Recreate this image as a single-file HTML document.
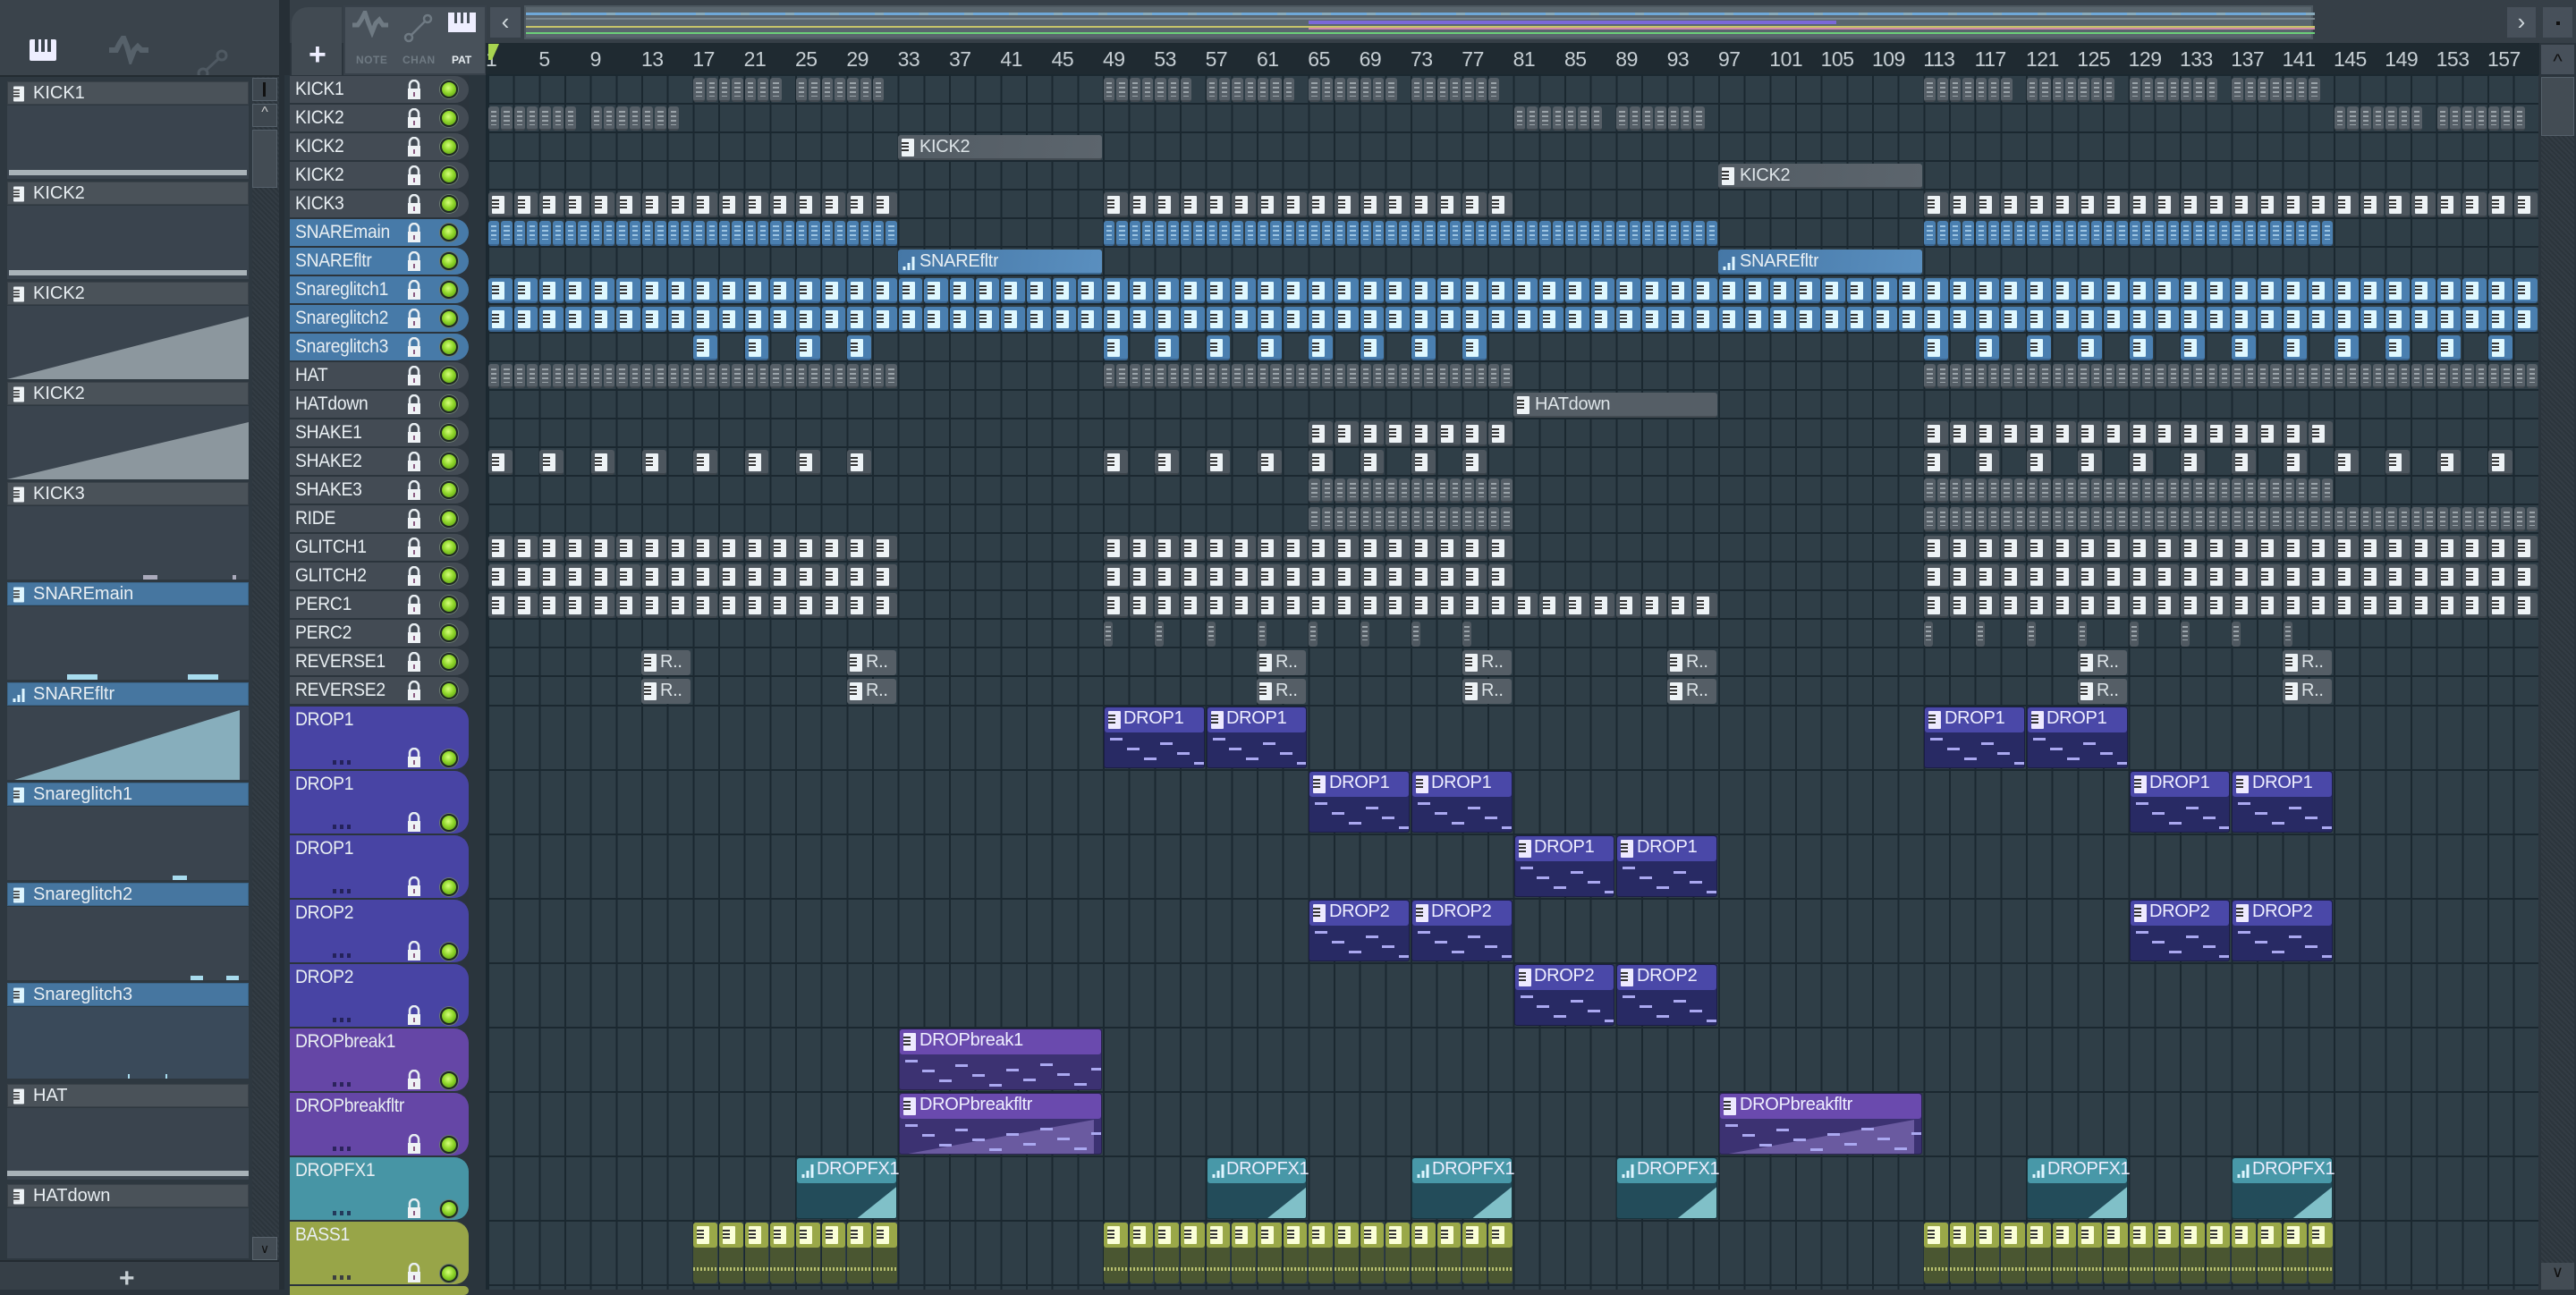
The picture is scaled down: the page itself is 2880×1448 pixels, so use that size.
<!DOCTYPE html>
<html><head><meta charset="utf-8"><style>
*{box-sizing:border-box;margin:0;padding:0}
body{width:2880px;height:1442px;overflow:hidden;background:#2b343c;font-family:"Liberation Sans",sans-serif;position:relative;color:#e8eef2}
.a{position:absolute}
#grid{position:absolute;left:545px;top:84px;width:2293px;height:1358px;background-color:#2f3e47;
background-image:repeating-linear-gradient(to right,#1b2830 0 2px,transparent 2px 28.666px);}
.rl{position:absolute;left:545px;width:2293px;height:2px;background:#1b2830}
.th{position:absolute;left:324px;width:200px;border-radius:0 16px 16px 0;background:#434b54;font-size:21px;letter-spacing:-.3px}
.th .n{position:absolute;left:6px;top:3px;white-space:nowrap}
.led{position:absolute;width:20px;height:20px;border-radius:50%;background:radial-gradient(circle at 45% 40%,#d4ff7a,#8fd62a 45%,#4f8e12);border:2px solid #1f2a22;box-shadow:0 0 0 1px #6a7a70}
.lk{position:absolute;width:16px;height:22px}
.dots{position:absolute;left:48px;width:22px;height:5px;background:repeating-linear-gradient(to right,rgba(20,20,60,.7) 0 4px,transparent 4px 8px)}
.c{position:absolute;border-radius:3px}
.lab{position:absolute;font-size:20px;letter-spacing:-.3px;white-space:nowrap;overflow:hidden}
.ci{position:absolute;width:14px;height:20px;background:#eef3f6;border-radius:1px}
.ci:after{content:"";position:absolute;left:0;top:4px;width:8px;height:12px;background:repeating-linear-gradient(to bottom,#333 0 2px,transparent 2px 4px)}
.ch{position:absolute;left:8px;width:270px;height:26px;background:#4a5259;border:1px solid #3a4249;font-size:20px}
.ch span{position:absolute;left:28px;top:1px}
.ch .ci{left:5px;top:3px;transform:scale(.85)}
.cb{position:absolute;left:8px;width:270px;background:#3a444e}
</style></head><body>

<div class="a" style="left:0;top:0;width:318px;height:84px;background:#3a434b"></div>
<div class="a" style="left:33px;top:44px;width:30px;height:24px;background:#eef;border-radius:2px"><div class="a" style="left:6px;top:0;width:4px;height:14px;background:#3a434b"></div><div class="a" style="left:13px;top:0;width:4px;height:14px;background:#3a434b"></div><div class="a" style="left:20px;top:0;width:4px;height:14px;background:#3a434b"></div></div>
<svg class="a" style="left:120px;top:40px" width="46" height="32"><path d="M2 16h8l4-8 4-6 4 10 4 14 4-10 4-4 4 4h8" stroke="#56616a" stroke-width="6" fill="none"/></svg>
<svg class="a" style="left:220px;top:54px" width="36" height="40"><circle cx="7" cy="28" r="5" stroke="#4f5962" stroke-width="3" fill="none"/><circle cx="28" cy="8" r="5" stroke="#4f5962" stroke-width="3" fill="none"/><path d="M11 24L24 12" stroke="#4f5962" stroke-width="3"/></svg>
<div class="a" style="left:0;top:84px;width:318px;height:2px;background:#232b31"></div>
<div class="a" style="left:0;top:86px;width:282px;height:1328px;background:#2e3840"></div>

<div class="ch" style="top:91px"><div class="ci"></div><span>KICK1</span></div><div class="cb" style="top:118px;height:82px"><div class="a" style="left:2px;bottom:4px;width:266px;height:6px;background:#a8b2b8"></div></div>
<div class="ch" style="top:203px"><div class="ci"></div><span>KICK2</span></div><div class="cb" style="top:230px;height:82px"><div class="a" style="left:2px;bottom:4px;width:266px;height:6px;background:#a8b2b8"></div></div>
<div class="ch" style="top:315px"><div class="ci"></div><span>KICK2</span></div><div class="cb" style="top:342px;height:82px"><div class="a" style="left:0;bottom:0;width:270px;height:70px;background:#8c979e;clip-path:polygon(0 100%,100% 0,100% 100%)"></div></div>
<div class="ch" style="top:427px"><div class="ci"></div><span>KICK2</span></div><div class="cb" style="top:454px;height:82px"><div class="a" style="left:0;bottom:0;width:270px;height:64px;background:#8c979e;clip-path:polygon(0 100%,100% 0,100% 100%)"></div></div>
<div class="ch" style="top:539px"><div class="ci"></div><span>KICK3</span></div><div class="cb" style="top:566px;height:82px"><div class="a" style="left:152px;bottom:0;width:16px;height:5px;background:#aab"></div><div class="a" style="left:252px;bottom:0;width:4px;height:5px;background:#aab"></div></div>
<div class="ch" style="top:651px;background:#4676a0;border-color:#3b6588"><div class="ci" style="background:#dff6ff"></div><span>SNAREmain</span></div><div class="cb" style="top:678px;height:82px"><div class="a" style="left:67px;bottom:0;width:34px;height:6px;background:#a8dcee"></div><div class="a" style="left:202px;bottom:0;width:34px;height:6px;background:#a8dcee"></div></div>
<div class="ch" style="top:763px;background:#4676a0;border-color:#3b6588"><svg class="a" style="left:4px;top:4px" width="18" height="18"><path d="M3 17v-4M8 17v-8M13 17V2" stroke="#dff6ff" stroke-width="3"/></svg><span>SNAREfltr</span></div><div class="cb" style="top:790px;height:82px"><div class="a" style="left:8px;bottom:0;width:252px;height:78px;background:#87aebc;clip-path:polygon(0 100%,100% 0,100% 100%)"></div></div>
<div class="ch" style="top:875px;background:#4676a0;border-color:#3b6588"><div class="ci" style="background:#dff6ff"></div><span>Snareglitch1</span></div><div class="cb" style="top:902px;height:82px"><div class="a" style="left:185px;bottom:0;width:16px;height:5px;background:#a8dcee"></div></div>
<div class="ch" style="top:987px;background:#4676a0;border-color:#3b6588"><div class="ci" style="background:#dff6ff"></div><span>Snareglitch2</span></div><div class="cb" style="top:1014px;height:82px"><div class="a" style="left:205px;bottom:0;width:14px;height:5px;background:#a8dcee"></div><div class="a" style="left:245px;bottom:0;width:14px;height:5px;background:#a8dcee"></div></div>
<div class="ch" style="top:1099px;background:#4676a0;border-color:#3b6588"><div class="ci" style="background:#dff6ff"></div><span>Snareglitch3</span></div><div class="cb" style="top:1126px;height:80px;background:#3a4a5a"><div class="a" style="left:135px;bottom:0;width:2px;height:5px;background:#a8dcee"></div><div class="a" style="left:177px;bottom:0;width:2px;height:5px;background:#a8dcee"></div></div>
<div class="ch" style="top:1212px"><div class="ci"></div><span>HAT</span></div><div class="cb" style="top:1239px;height:80px"><div class="a" style="left:0;bottom:4px;width:270px;height:6px;background:#a8b2b8"></div></div>
<div class="ch" style="top:1324px"><div class="ci"></div><span>HATdown</span></div><div class="cb" style="top:1351px;height:56px"></div>
<div class="a" style="left:0;top:1409px;width:312px;height:33px;background:#363f47;border-top:2px solid #232b31"></div>
<div class="a" style="left:133px;top:1420px;font-size:30px;font-weight:bold;color:#c8d0d4;line-height:20px">+</div>

<div class="a" style="left:282px;top:86px;width:30px;height:1322px;background:repeating-linear-gradient(45deg,#2c353c 0 2px,#333c44 2px 4px)"></div>
<div class="a" style="left:282px;top:87px;width:28px;height:26px;background:#3e474f;border:1px solid #55606a"><div class="a" style="left:11px;top:4px;width:3px;height:16px;background:#111"></div></div>
<div class="a" style="left:282px;top:116px;width:28px;height:26px;background:#3e474f;border:1px solid #55606a;color:#ccc;font-size:16px;text-align:center">^</div>
<div class="a" style="left:282px;top:145px;width:28px;height:65px;background:#434c54;border:1px solid #55606a"></div>
<div class="a" style="left:282px;top:1383px;width:28px;height:26px;background:#434c54;border:1px solid #5a656e;color:#111;font-size:14px;text-align:center;line-height:24px">∨</div>
<div class="a" style="left:312px;top:0;width:12px;height:1442px;background:#262f36"></div>

<div class="a" style="left:324px;top:0;width:2556px;height:48px;background:#363f47"></div>
<div class="a" style="left:326px;top:8px;width:56px;height:76px;background:#414a52;border-radius:18px 0 0 0"></div>
<div class="a" style="left:345px;top:42px;font-size:34px;font-weight:bold;color:#eef">+</div>
<div class="a" style="left:384px;top:6px;width:160px;height:78px;background:#48515a;border:2px solid #38414a"></div>
<svg class="a" style="left:392px;top:12px" width="44" height="30"><path d="M2 16h6l4-6 4-8 4 12 4 10 4-10 4-4 4 6h6" stroke="#6f7a83" stroke-width="5" fill="none"/></svg>
<svg class="a" style="left:450px;top:14px" width="36" height="36"><circle cx="7" cy="28" r="4" stroke="#6f7a83" stroke-width="2.5" fill="none"/><circle cx="28" cy="7" r="4" stroke="#6f7a83" stroke-width="2.5" fill="none"/><path d="M10 25L25 10" stroke="#6f7a83" stroke-width="2.5"/></svg>
<div class="a" style="left:501px;top:14px;width:31px;height:22px;background:#eef"><div class="a" style="left:7px;top:0;width:3px;height:12px;background:#48515a"></div><div class="a" style="left:14px;top:0;width:3px;height:12px;background:#48515a"></div><div class="a" style="left:21px;top:0;width:3px;height:12px;background:#48515a"></div></div>
<div class="a" style="left:398px;top:60px;font-size:12px;font-weight:bold;color:#6f7a83;letter-spacing:.5px">NOTE</div>
<div class="a" style="left:450px;top:60px;font-size:12px;font-weight:bold;color:#6f7a83;letter-spacing:.5px">CHAN</div>
<div class="a" style="left:505px;top:60px;font-size:12px;font-weight:bold;color:#e6ecf0">PAT</div>
<div class="a" style="left:546px;top:6px;width:38px;height:38px;background:#47505a;border:2px solid #363f47;color:#d0d8dc;font-size:26px;text-align:center;line-height:32px">‹</div>
<div class="a" style="left:586px;top:6px;width:2000px;height:38px;background:#5a666e;border:2px solid #4d5860">
 <div class="a" style="left:0;top:6px;width:2000px;height:3px;background:repeating-linear-gradient(to right,#6fa8d8 0 40px,#8ab 40px 50px)"></div>
 <div class="a" style="left:0;top:12px;width:2000px;height:2px;background:#7a8890"></div>
 <div class="a" style="left:875px;top:15px;width:590px;height:4px;background:#7a68d8"></div>
 <div class="a" style="left:0;top:21px;width:2000px;height:2px;background:#c6c46a"></div>
 <div class="a" style="left:875px;top:23px;width:1125px;height:2px;background:#d08aa8"></div>
 <div class="a" style="left:0;top:28px;width:2000px;height:2px;background:#6ccf7a"></div>
</div>
<div class="a" style="left:2801px;top:6px;width:36px;height:38px;background:#47505a;border:2px solid #363f47;color:#d0d8dc;font-size:26px;text-align:center;line-height:32px">›</div>
<div class="a" style="left:2841px;top:6px;width:37px;height:38px;background:#47505a;border:2px solid #363f47"><div class="a" style="left:15px;top:16px;width:4px;height:4px;background:#111"></div></div>
<div class="a" style="left:2841px;top:50px;width:37px;height:33px;background:#47505a;color:#111;font-size:22px;text-align:center;line-height:38px">^</div>
<div class="a" style="left:2841px;top:86px;width:37px;height:66px;background:#434c54;border:1px solid #55606a"></div>
<div class="a" style="left:2841px;top:152px;width:37px;height:1290px;background:repeating-linear-gradient(45deg,#2c353c 0 2px,#333c44 2px 4px)"></div>
<div class="a" style="left:2841px;top:1412px;width:37px;height:30px;background:#434c54;color:#111;font-size:18px;text-align:center">∨</div>

<div class="a" style="left:543px;top:48px;width:2296px;height:36px;background:#1f2a31"></div>
<div id="ruler" class="a" style="left:0;top:48px;height:36px;font-size:23px;color:#c6ced3;letter-spacing:-.5px"></div>
<svg class="a" style="left:546px;top:49px" width="14" height="20"><path d="M0 0h12l-8 18H0z" fill="#a8d450"/></svg>

<div id="grid"></div>
<div class="a" style="left:524px;top:84px;width:21px;height:1358px;background:#2a353d;border-right:2px solid #1b2830"></div>
<div class="a" style="left:318px;top:84px;width:6px;height:1358px;background:#2a353d"></div>

<div id="clips"></div>

<div class="c" style="left:1004px;top:151px;width:228px;height:28px;background:linear-gradient(100deg,#535c64,#5c656d);border-bottom:2px solid #444c53"><div class="ci" style="left:4px;top:4px"></div><div class="lab" style="left:24px;top:2px;color:#dde4e8">KICK2</div></div>
<div class="c" style="left:1921px;top:183px;width:228px;height:28px;background:linear-gradient(100deg,#535c64,#5c656d);border-bottom:2px solid #444c53"><div class="ci" style="left:4px;top:4px"></div><div class="lab" style="left:24px;top:2px;color:#dde4e8">KICK2</div></div>
<div class="c" style="left:1004px;top:279px;width:228px;height:28px;background:linear-gradient(100deg,#4577a6,#5a8fbf);border-bottom:2px solid #3b6890"><svg class="a" style="left:4px;top:6px" width="18" height="18"><path d="M3 17v-4M8 17v-8M13 17V2" stroke="#dff6ff" stroke-width="3"/></svg><div class="lab" style="left:24px;top:2px">SNAREfltr</div></div>
<div class="c" style="left:1921px;top:279px;width:228px;height:28px;background:linear-gradient(100deg,#4577a6,#5a8fbf);border-bottom:2px solid #3b6890"><svg class="a" style="left:4px;top:6px" width="18" height="18"><path d="M3 17v-4M8 17v-8M13 17V2" stroke="#dff6ff" stroke-width="3"/></svg><div class="lab" style="left:24px;top:2px">SNAREfltr</div></div>
<div class="c" style="left:1692px;top:439px;width:228px;height:28px;background:#555e66;border-bottom:2px solid #444c53"><div class="ci" style="left:4px;top:4px"></div><div class="lab" style="left:24px;top:2px;color:#dde4e8">HATdown</div></div>

<div class="a" style="left:0;top:0" id="rv">
<div class="c" style="left:717px;top:727px;width:55px;height:28px;background:#555e66"><div class="ci" style="left:3px;top:4px"></div><div class="lab" style="left:21px;top:2px;color:#dde4e8">R..</div></div>
<div class="c" style="left:947px;top:727px;width:55px;height:28px;background:#555e66"><div class="ci" style="left:3px;top:4px"></div><div class="lab" style="left:21px;top:2px;color:#dde4e8">R..</div></div>
<div class="c" style="left:1405px;top:727px;width:55px;height:28px;background:#555e66"><div class="ci" style="left:3px;top:4px"></div><div class="lab" style="left:21px;top:2px;color:#dde4e8">R..</div></div>
<div class="c" style="left:1635px;top:727px;width:55px;height:28px;background:#555e66"><div class="ci" style="left:3px;top:4px"></div><div class="lab" style="left:21px;top:2px;color:#dde4e8">R..</div></div>
<div class="c" style="left:1864px;top:727px;width:55px;height:28px;background:#555e66"><div class="ci" style="left:3px;top:4px"></div><div class="lab" style="left:21px;top:2px;color:#dde4e8">R..</div></div>
<div class="c" style="left:2323px;top:727px;width:55px;height:28px;background:#555e66"><div class="ci" style="left:3px;top:4px"></div><div class="lab" style="left:21px;top:2px;color:#dde4e8">R..</div></div>
<div class="c" style="left:2552px;top:727px;width:55px;height:28px;background:#555e66"><div class="ci" style="left:3px;top:4px"></div><div class="lab" style="left:21px;top:2px;color:#dde4e8">R..</div></div>
<div class="c" style="left:717px;top:759px;width:55px;height:28px;background:#555e66"><div class="ci" style="left:3px;top:4px"></div><div class="lab" style="left:21px;top:2px;color:#dde4e8">R..</div></div>
<div class="c" style="left:947px;top:759px;width:55px;height:28px;background:#555e66"><div class="ci" style="left:3px;top:4px"></div><div class="lab" style="left:21px;top:2px;color:#dde4e8">R..</div></div>
<div class="c" style="left:1405px;top:759px;width:55px;height:28px;background:#555e66"><div class="ci" style="left:3px;top:4px"></div><div class="lab" style="left:21px;top:2px;color:#dde4e8">R..</div></div>
<div class="c" style="left:1635px;top:759px;width:55px;height:28px;background:#555e66"><div class="ci" style="left:3px;top:4px"></div><div class="lab" style="left:21px;top:2px;color:#dde4e8">R..</div></div>
<div class="c" style="left:1864px;top:759px;width:55px;height:28px;background:#555e66"><div class="ci" style="left:3px;top:4px"></div><div class="lab" style="left:21px;top:2px;color:#dde4e8">R..</div></div>
<div class="c" style="left:2323px;top:759px;width:55px;height:28px;background:#555e66"><div class="ci" style="left:3px;top:4px"></div><div class="lab" style="left:21px;top:2px;color:#dde4e8">R..</div></div>
<div class="c" style="left:2552px;top:759px;width:55px;height:28px;background:#555e66"><div class="ci" style="left:3px;top:4px"></div><div class="lab" style="left:21px;top:2px;color:#dde4e8">R..</div></div>
</div>

<div id="big">
<div class="lab a" style="left:1256px;top:792px">DROP1</div><div class="lab a" style="left:1371px;top:792px">DROP1</div><div class="lab a" style="left:2174px;top:792px">DROP1</div><div class="lab a" style="left:2288px;top:792px">DROP1</div>
<div class="lab a" style="left:1486px;top:864px">DROP1</div><div class="lab a" style="left:1600px;top:864px">DROP1</div><div class="lab a" style="left:2403px;top:864px">DROP1</div><div class="lab a" style="left:2518px;top:864px">DROP1</div>
<div class="lab a" style="left:1715px;top:936px">DROP1</div><div class="lab a" style="left:1830px;top:936px">DROP1</div>
<div class="lab a" style="left:1486px;top:1008px">DROP2</div><div class="lab a" style="left:1600px;top:1008px">DROP2</div><div class="lab a" style="left:2403px;top:1008px">DROP2</div><div class="lab a" style="left:2518px;top:1008px">DROP2</div>
<div class="lab a" style="left:1715px;top:1080px">DROP2</div><div class="lab a" style="left:1830px;top:1080px">DROP2</div>
<div class="lab a" style="left:1028px;top:1152px">DROPbreak1</div>
<div class="lab a" style="left:1028px;top:1224px">DROPbreakfltr</div><div class="lab a" style="left:1945px;top:1224px">DROPbreakfltr</div>
<div class="lab a" style="left:913px;top:1296px">DROPFX1</div><div class="lab a" style="left:1371px;top:1296px">DROPFX1</div><div class="lab a" style="left:1601px;top:1296px">DROPFX1</div><div class="lab a" style="left:1830px;top:1296px">DROPFX1</div><div class="lab a" style="left:2289px;top:1296px">DROPFX1</div><div class="lab a" style="left:2518px;top:1296px">DROPFX1</div>
</div>

<div id="th">
<div class="th" style="top:85px;height:30px"><span class="n">KICK1</span></div>
<div class="th" style="top:117px;height:30px"><span class="n">KICK2</span></div>
<div class="th" style="top:149px;height:30px"><span class="n">KICK2</span></div>
<div class="th" style="top:181px;height:30px"><span class="n">KICK2</span></div>
<div class="th" style="top:213px;height:30px"><span class="n">KICK3</span></div>
<div class="th" style="top:245px;height:30px;background:#477aa8"><span class="n">SNAREmain</span></div>
<div class="th" style="top:277px;height:30px;background:#477aa8"><span class="n">SNAREfltr</span></div>
<div class="th" style="top:309px;height:30px;background:#477aa8"><span class="n">Snareglitch1</span></div>
<div class="th" style="top:341px;height:30px;background:#477aa8"><span class="n">Snareglitch2</span></div>
<div class="th" style="top:373px;height:30px;background:#477aa8"><span class="n">Snareglitch3</span></div>
<div class="th" style="top:405px;height:30px"><span class="n">HAT</span></div>
<div class="th" style="top:437px;height:30px"><span class="n">HATdown</span></div>
<div class="th" style="top:469px;height:30px"><span class="n">SHAKE1</span></div>
<div class="th" style="top:501px;height:30px"><span class="n">SHAKE2</span></div>
<div class="th" style="top:533px;height:30px"><span class="n">SHAKE3</span></div>
<div class="th" style="top:565px;height:30px"><span class="n">RIDE</span></div>
<div class="th" style="top:597px;height:30px"><span class="n">GLITCH1</span></div>
<div class="th" style="top:629px;height:30px"><span class="n">GLITCH2</span></div>
<div class="th" style="top:661px;height:30px"><span class="n">PERC1</span></div>
<div class="th" style="top:693px;height:30px"><span class="n">PERC2</span></div>
<div class="th" style="top:725px;height:30px"><span class="n">REVERSE1</span></div>
<div class="th" style="top:757px;height:30px"><span class="n">REVERSE2</span></div>
<div class="th" style="top:790px;height:70px;background:#4844a4"><span class="n">DROP1</span></div>
<div class="th" style="top:862px;height:70px;background:#4844a4"><span class="n">DROP1</span></div>
<div class="th" style="top:934px;height:70px;background:#4844a4"><span class="n">DROP1</span></div>
<div class="th" style="top:1006px;height:70px;background:#4844a4"><span class="n">DROP2</span></div>
<div class="th" style="top:1078px;height:70px;background:#4844a4"><span class="n">DROP2</span></div>
<div class="th" style="top:1150px;height:70px;background:#6546a6"><span class="n">DROPbreak1</span></div>
<div class="th" style="top:1222px;height:70px;background:#6546a6"><span class="n">DROPbreakfltr</span></div>
<div class="th" style="top:1294px;height:70px;background:#4795a5"><span class="n">DROPFX1</span></div>
<div class="th" style="top:1366px;height:70px;background:#98a548"><span class="n">BASS1</span></div>
<div class="th" style="top:1438px;height:10px;background:#98a548"></div>
</div>

<script>
const X=b=>545+(b-1)*14.333, RY=r=>r<22?85+r*32:790+(r-22)*72, BW=14.333;
let h='';
let rh='';for(let n=1;n<=157;n+=4){rh+=`<div class="a" style="left:${X(n)+(n==1?-2:0)}px;top:5px">${n}</div>`}
document.getElementById('ruler').innerHTML=rh;
for(let r=0;r<=31;r++){h+=`<div class="rl" style="top:${RY(r)-2}px"></div>`}
document.querySelectorAll('#th .th').forEach((e,i)=>{if(i>30)return;const big=i>=22;const ly=big?46:4,cy=big?42:3;
e.insertAdjacentHTML('beforeend',`<svg class="lk" style="left:131px;top:${ly}px" viewBox="0 0 16 22"><path d="M3 11V6a5 5 0 0 1 10 0v5" stroke="#e8eef2" stroke-width="2.5" fill="none"/><rect x="1" y="10" width="14" height="12" fill="#eef2f5"/><rect x="7" y="14" width="2" height="5" fill="#8a5a80"/></svg><div class="led" style="left:168px;top:${cy+ (big?6:2)}px"></div>`+(big?`<div class="dots" style="top:60px"></div>`:''));});
function ico(col){return `<div class="ci" style="left:4px;top:4px;background:${col}"></div>`}
function grp(r,s,e,w,step,type){for(let b=s;b<=e;b+=step){const x=X(b)+1,y=RY(r)+1,wd=w*BW-2;
 if(type=='g1')h+=`<div class="c" style="left:${x}px;top:${y+1}px;width:${wd}px;height:27px;background:#565f67;border-bottom:2px solid #434a51"><div class="a" style="left:3px;top:5px;width:${wd-6}px;height:16px;background:repeating-linear-gradient(to bottom,#9aa3a9 0 2px,transparent 2px 5px)"></div></div>`;
 else if(type=='g2')h+=`<div class="c" style="left:${x}px;top:${y+1}px;width:${wd}px;height:28px;background:#4d565e;border-bottom:2px solid #3d454c">${ico('#eef3f6')}</div>`;
 else if(type=='b1')h+=`<div class="c" style="left:${x}px;top:${y+1}px;width:${wd}px;height:28px;background:#4a7fb0;border-bottom:2px solid #3a6590"><div class="a" style="left:3px;top:5px;width:${wd-6}px;height:16px;background:repeating-linear-gradient(to bottom,#9cc4e2 0 2px,transparent 2px 5px)"></div></div>`;
 else if(type=='b2')h+=`<div class="c" style="left:${x}px;top:${y+1}px;width:${wd}px;height:28px;background:#4a7fb0;border-bottom:2px solid #3a6590">${ico('#dff8ff')}</div>`;
 else if(type=='p')h+=`<div class="c" style="left:${x}px;top:${y+1}px;width:10px;height:28px;background:#505961"><div class="a" style="left:2px;top:5px;width:6px;height:16px;background:repeating-linear-gradient(to bottom,#9aa3a9 0 2px,transparent 2px 5px)"></div></div>`;
 else if(type=='o2')h+=`<div class="c" style="left:${x}px;top:${y}px;width:${wd}px;height:68px;background:#4a5631;border-radius:3px"><div class="a" style="left:0;top:0;width:${wd}px;height:28px;background:#9aa848;border-radius:3px">${ico('#fbffd8')}</div><div class="a" style="left:0;top:50px;width:${wd}px;height:4px;background:repeating-linear-gradient(to right,#b8c070 0 2px,transparent 2px 4px)"></div></div>`;
}}
const G=(r,a,t,w,st)=>a.forEach(([s,e])=>grp(r,s,e,w,st,t));
G(0,[[17,23],[25,31],[49,55],[57,63],[65,71],[73,79],[113,119],[121,127],[129,135],[137,143]],'g1',1,1);
G(1,[[1,7],[9,15],[81,87],[89,95],[145,151],[153,159]],'g1',1,1);
G(4,[[1,31],[49,79],[113,159]],'g2',2,2);
G(5,[[1,32],[49,96],[113,144]],'b1',1,1);
G(7,[[1,159]],'b2',2,2);G(8,[[1,159]],'b2',2,2);
G(9,[[17,29],[49,77],[113,157]],'b2',2,4);
G(10,[[1,32],[49,80],[113,160]],'g1',1,1);
G(12,[[65,79],[113,143]],'g2',2,2);
G(13,[[1,29],[49,77],[113,157]],'g2',2,4);
G(14,[[65,80],[113,144]],'g1',1,1);
G(15,[[65,80],[113,160]],'g1',1,1);
G(16,[[1,31],[49,79],[113,159]],'g2',2,2);
G(17,[[1,31],[49,79],[113,159]],'g2',2,2);
G(18,[[1,31],[49,95],[113,159]],'g2',2,2);
G(19,[[49,77],[113,141]],'p',1,4);
G(30,[[17,31],[49,79],[113,143]],'o2',2,2);
function big(r,b,n,hc,bc,kind){const x=X(b)+1,y=RY(r),w=n*BW-2;let body='';
 if(kind=='notes'||kind=='bramp'){const cnt=Math.round(n*0.75);for(let k=0;k<cnt;k++)body+=`<div class="a" style="left:${6+k*w/cnt}px;top:${34+(k*11)%28}px;width:14px;height:3px;background:#aaa8f0"></div>`}
 if(kind=='ramp')body=`<div class="a" style="left:${w*0.6}px;bottom:0;width:${w*0.4}px;height:36px;background:#80c0c8;clip-path:polygon(0 100%,100% 0,100% 100%)"></div>`;
 if(kind=='bramp')body=`<div class="a" style="left:10px;bottom:0;width:${w-20}px;height:38px;background:#6a5aa0;clip-path:polygon(0 100%,100% 0,100% 100%)"></div>`+body;
 const ic=kind=='ramp'?`<svg class="a" style="left:4px;top:5px" width="18" height="18"><path d="M3 17v-4M8 17v-8M13 17V2" stroke="#dff6ff" stroke-width="3"/></svg>`:ico('#eeeaff');
 h+=`<div class="c" style="left:${x}px;top:${y}px;width:${w}px;height:69px;background:${bc};border:1px solid rgba(0,0,0,.3);overflow:hidden">${body}<div class="a" style="left:0;top:0;width:${w-2}px;height:28px;background:${hc};border-radius:3px">${ic}</div></div>`;}
const D='#4a48a8',DB='#282a64';
[[22,[49,57,113,121]],[23,[65,73,129,137]],[24,[81,89]],[25,[65,73,129,137]],[26,[81,89]]].forEach(([r,a])=>a.forEach(b=>big(r,b,8,D,DB,'notes')));
big(27,33,16,'#6a4aae','#3c3272','notes');
big(28,33,16,'#6a4aae','#3c3272','bramp');big(28,97,16,'#6a4aae','#3c3272','bramp');
[25,57,73,89,121,137].forEach(b=>big(29,b,8,'#4898a8','#234c5a','ramp'));
document.getElementById('clips').innerHTML=h;
</script>
<style>#big .lab{z-index:5;color:#eef}#rv .c{z-index:4}#clips{position:absolute;left:0;top:0}.th .n{transform:scaleX(.92);transform-origin:left}</style>
</body></html>
